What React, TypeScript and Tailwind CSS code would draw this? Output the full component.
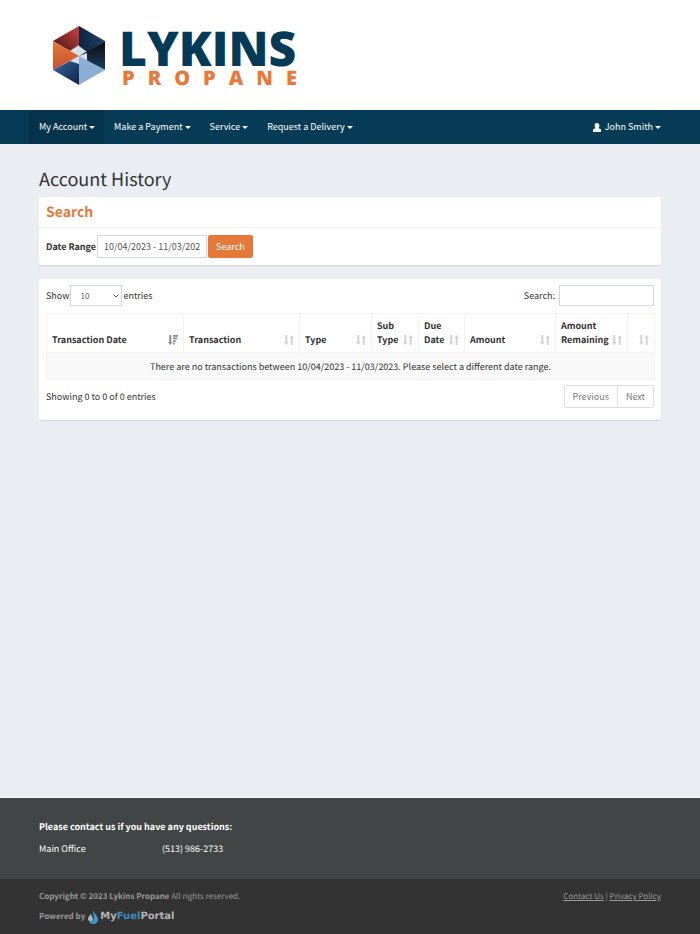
import { clsx } from 'clsx'

interface NavItem {
  label: string
  active?: boolean
}

interface Column {
  label: string
  width: string
  sorted?: boolean
}

const navItems: NavItem[] = [
  { label: 'My Account', active: true },
  { label: 'Make a Payment' },
  { label: 'Service' },
  { label: 'Request a Delivery' },
]

const columns: Column[] = [
  { label: 'Transaction Date', width: 'w-[137px]', sorted: true },
  { label: 'Transaction', width: 'w-[116px]' },
  { label: 'Type', width: 'w-[72px]' },
  { label: 'Sub Type', width: 'w-[47px]' },
  { label: 'Due Date', width: 'w-[46px]' },
  { label: 'Amount', width: 'w-[91px]' },
  { label: 'Amount Remaining', width: 'w-[72px]' },
  { label: '', width: 'w-[27px]' },
]

function Caret() {
  return (
    <svg viewBox="0 0 6 3" className="h-[3px] w-1.5" fill="currentColor" aria-hidden="true">
      <path d="M0 0h6L3 3z" />
    </svg>
  )
}

function SortIcon({ sorted }: { sorted?: boolean }) {
  if (sorted) {
    return (
      <svg viewBox="0 0 10 10" className="h-2.5 w-2.5 shrink-0 text-[#8c8c8c]" fill="currentColor" aria-hidden="true">
        <path d="M1.300 0h2v7H4.600L2.300 10 0 7h1.300zM5 0h5v1.800H5zM5 2.600h4v1.700H5zM5 5.200h3v1.600H5zM5 7.800h1.800v1.600H5z" />
      </svg>
    )
  }
  return (
    <svg viewBox="0 0 10 10" className="h-2.5 w-2.5 shrink-0 text-[#d3d3d3]" fill="currentColor" aria-hidden="true">
      <path d="M1.300 0h2v7H4.600L2.300 10 0 7h1.300zM7.700 0 10 3H8.700v7h-2V3H5.400z" />
    </svg>
  )
}

function Logo() {
  return (
    <svg viewBox="0 -15 280 90" className="h-[90px] w-[280px]" role="img" aria-label="Lykins Propane">
      <defs>
        <linearGradient id="red" x1="1" y1="0" x2="0" y2="1">
          <stop offset="0.2" stopColor="#b83a33" />
          <stop offset="0.9" stopColor="#4a1820" />
        </linearGradient>
        <linearGradient id="orange" x1="0" y1="0" x2="0" y2="1">
          <stop offset="0" stopColor="#e47a39" />
          <stop offset="1" stopColor="#c9502f" />
        </linearGradient>
        <linearGradient id="navy" x1="0" y1="0" x2="1" y2="0">
          <stop offset="0" stopColor="#10233f" />
          <stop offset="1" stopColor="#1d4266" />
        </linearGradient>
        <linearGradient id="black" x1="0" y1="0" x2="0" y2="1">
          <stop offset="0.2" stopColor="#10131d" />
          <stop offset="1" stopColor="#1c4061" />
        </linearGradient>
        <linearGradient id="blue" x1="0" y1="0" x2="1" y2="1">
          <stop offset="0.1" stopColor="#315f99" />
          <stop offset="0.9" stopColor="#14294a" />
        </linearGradient>
      </defs>
      <path d="M20 27l8-7 10 8v16l-17-8z" fill="#d8e0ea" />
      <path d="M29 1v19l-9 6L3 16z" fill="url(#red)" />
      <path d="M29 1l26 15-18 11-8-6z" fill="url(#navy)" />
      <path d="M55 16v29l-18-9v-8l-8 3z" fill="url(#black)" />
      <path d="M3 16l26 15L3 45z" fill="url(#orange)" />
      <path d="M3 45l17-9 9 3v21z" fill="url(#blue)" />
      <path d="M29 31l26 14-26 15z" fill="#8eafd5" />
      <text x="69" y="41" className="fill-[#053a57] font-['Open_Sans'] text-[48px] font-extrabold">
        LYKINS
      </text>
      <text x="72" y="60" className="fill-[#e8793a] font-['Open_Sans'] text-[20px] font-extrabold tracking-[13px]">
        PROPANE
      </text>
    </svg>
  )
}

function PortalLogo() {
  return (
    <a href="#portal" className="flex items-center gap-0.5 font-['DejaVu_Sans',sans-serif] text-[10px] font-bold text-[#b5b5b5]">
      <svg viewBox="0 0 10 14" className="h-3.5 w-2.5" aria-hidden="true">
        <path d="M5.500 0C6 4 10 6 10 9.500C10 12 8 14 5 14 3 14 1.500 13 1 11.500 4 12.500 6 11 6 8 6 5 4.500 3 5.500 0z" fill="#3c9bd0" />
        <path d="M2.800 3C3 6 5 7 5 9c0 1.500-1 2.500-2.300 2.500S0 10.500 0 8.800C0 6.500 2.500 6 2.800 3z" fill="#b5b5b5" />
      </svg>
      <span>
        My<span className="text-[#3c8dbc]">Fuel</span>Portal
      </span>
    </a>
  )
}

export default function App() {
  return (
    <div className="flex min-h-screen flex-col bg-[#eaeef3] font-['Noto_Sans_CJK_SC',sans-serif] text-[9px] leading-[14px] text-[#333] [text-rendering:geometricPrecision]">
      <header>
        <div className="bg-white px-[50px] py-2.5">
          <Logo />
        </div>
        <nav className="flex h-[34px] justify-between bg-[#063b56] pr-[39px] pl-[29px] text-white">
          <div className="flex">
            {navItems.map((item) => (
              <button
                key={item.label}
                type="button"
                className={clsx('flex items-center gap-0.5 pr-[9px] pl-2.5', item.active && 'bg-[#05334b]')}
              >
                {item.label}
                <Caret />
              </button>
            ))}
          </div>
          <button type="button" className="flex items-center gap-0.5">
            <svg viewBox="0 0 8 9" className="mr-0.5 h-[9px] w-2" fill="currentColor" aria-hidden="true">
              <path d="M4 0c1.600 0 2.400 1 2.400 2.600 0 1.200-.5 2-1 2.600L7.500 6Q8 6.300 8 7V9H0V7Q0 6.300 .5 6L2.600 5.200c-.5-.6-1-1.400-1-2.600C1.600 1 2.400 0 4 0z" />
            </svg>
            John Smith
            <Caret />
          </button>
        </nav>
      </header>

      <main className="flex-1 px-[39px] pt-[23px]">
        <h1 className="mb-[5px] text-[18px] leading-[25px]">Account History</h1>

        <section className="mb-3.5 rounded-xs bg-white shadow-[0_1px_1px_rgba(0,0,0,0.1)]">
          <h2 className="border-b border-[#f4f4f4] px-[7px] py-[5px] text-[14px] leading-5 font-bold text-[#e6793a]">
            Search
          </h2>
          <form className="flex items-center gap-px px-[7px] py-[7px]" onSubmit={(e) => e.preventDefault()}>
            <label htmlFor="range" className="font-bold">
              Date Range
            </label>
            <input
              id="range"
              type="text"
              defaultValue="10/04/2023 - 11/03/2023"
              className="h-[23px] w-[110px] border border-[#d2d6de] px-1.5 text-[#555]"
            />
            <button type="submit" className="h-[23px] rounded-xs bg-[#e6793a] px-2 text-white">
              Search
            </button>
          </form>
        </section>

        <section className="rounded-xs bg-white px-[7px] pt-1.5 pb-3 shadow-[0_1px_1px_rgba(0,0,0,0.1)]">
          <div className="mb-[7px] flex items-center justify-between">
            <div className="flex items-center gap-px">
              <label htmlFor="length">Show</label>
              <div className="relative">
                <select
                  id="length"
                  defaultValue="10"
                  className="block h-[21px] w-[52px] appearance-none border border-[#d2d6de] bg-white px-[9px] text-[8px] text-[#555]"
                >
                  <option>10</option>
                  <option>25</option>
                  <option>50</option>
                </select>
                <svg viewBox="0 0 6 4" className="pointer-events-none absolute top-[9px] right-[3px] h-1 w-1.5" fill="none" stroke="#555" aria-hidden="true">
                  <path d="M0.500 0.500 3 3 5.500 0.500" />
                </svg>
              </div>
              <span>entries</span>
            </div>
            <div className="flex items-center gap-1">
              <label htmlFor="filter">Search:</label>
              <input id="filter" type="search" className="h-[21px] w-[95px] border border-[#d2d6de] px-2" />
            </div>
          </div>

          <table className="w-full table-fixed border-collapse border border-[#f4f4f4]">
            <thead>
              <tr>
                {columns.map((column) => (
                  <th
                    key={column.label}
                    className={clsx('border border-b-2 border-[#f4f4f4] px-[5px] py-[5px] text-left align-bottom font-bold', column.width)}
                  >
                    <div className="flex items-end justify-between">
                      <span>{column.label}</span>
                      <span className="flex h-3.5 items-center">
                        <SortIcon sorted={column.sorted} />
                      </span>
                    </div>
                  </th>
                ))}
              </tr>
            </thead>
            <tbody>
              <tr className="bg-[#f9f9f9]">
                <td colSpan={8} className="px-[5px] pt-1.5 pb-[5px] text-center">
                  There are no transactions between 10/04/2023 - 11/03/2023. Please select a different date range.
                </td>
              </tr>
            </tbody>
          </table>

          <div className="mt-[5px] flex items-center justify-between">
            <span>Showing 0 to 0 of 0 entries</span>
            <div className="flex h-[23px] rounded-xs border border-[#ddd] text-[#777]">
              <button type="button" className="border-r border-[#ddd] px-2">
                Previous
              </button>
              <button type="button" className="px-2">
                Next
              </button>
            </div>
          </div>
        </section>
      </main>

      <footer>
        <div className="border-t border-white bg-[#424545] px-[39px] pt-[22px] pb-[23px] text-white">
          <p className="mb-2 font-bold">Please contact us if you have any questions:</p>
          <div className="flex">
            <span className="w-[123px]">Main Office</span>
            <span>(513) 986-2733</span>
          </div>
        </div>
        <div className="bg-[#333] px-[39px] pt-[11px] pb-2.5 text-[8px] leading-[14px] text-[#999]">
          <div className="mb-1.5 flex justify-between">
            <p>
              <strong>Copyright © 2023 Lykins Propane</strong> All rights reserved.
            </p>
            <p>
              <a href="#contact" className="underline">Contact Us</a> | <a href="#privacy" className="underline">Privacy Policy</a>
            </p>
          </div>
          <div className="flex items-center gap-[3px] font-bold">
            Powered by
            <PortalLogo />
          </div>
        </div>
      </footer>
    </div>
  )
}
